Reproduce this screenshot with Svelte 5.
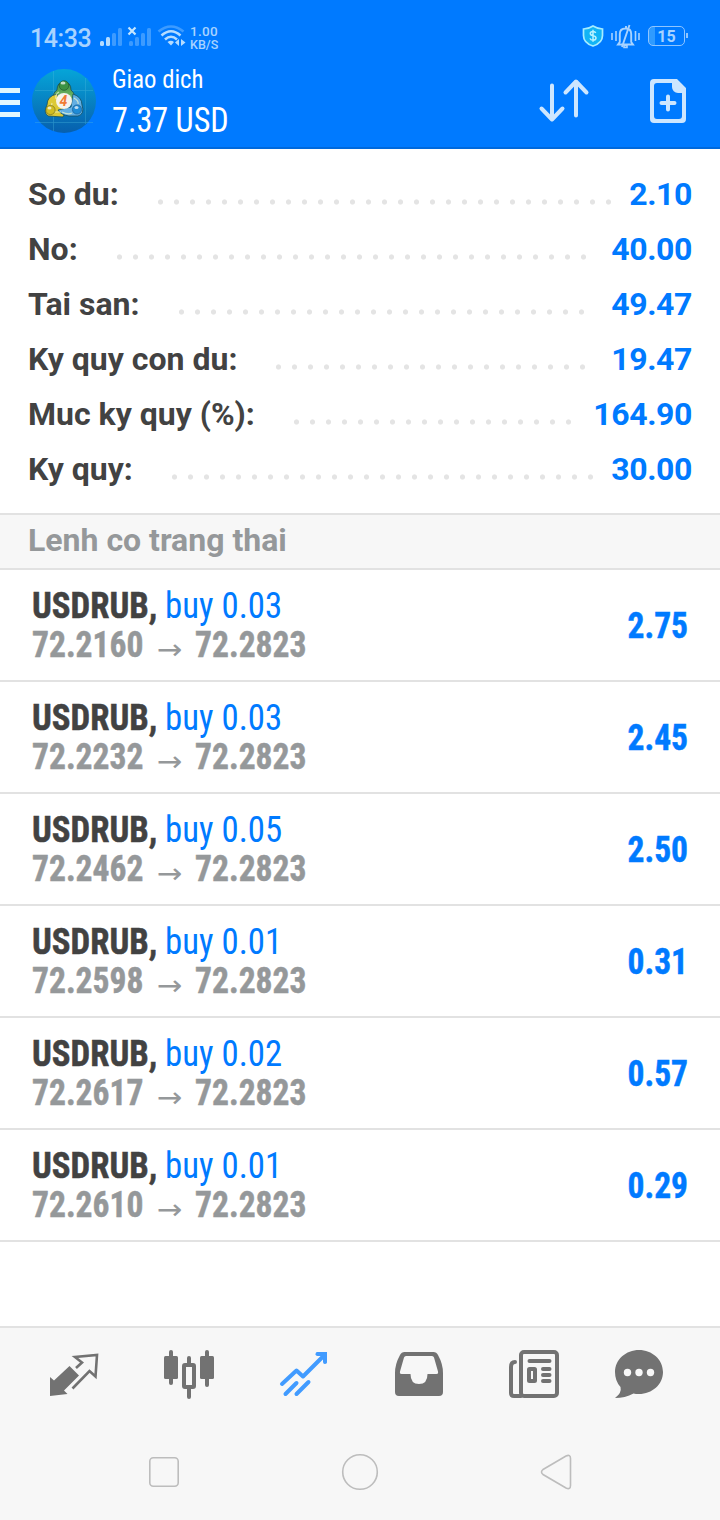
<script lang="ts">
  const summary = [
    { label: "So du:", value: "2.10" },
    { label: "No:", value: "40.00" },
    { label: "Tai san:", value: "49.47" },
    { label: "Ky quy con du:", value: "19.47" },
    { label: "Muc ky quy (%):", value: "164.90" },
    { label: "Ky quy:", value: "30.00" },
  ];

  const positions = [
    { volume: "0.03", open: "72.2160", current: "72.2823", profit: "2.75" },
    { volume: "0.03", open: "72.2232", current: "72.2823", profit: "2.45" },
    { volume: "0.05", open: "72.2462", current: "72.2823", profit: "2.50" },
    { volume: "0.01", open: "72.2598", current: "72.2823", profit: "0.31" },
    { volume: "0.02", open: "72.2617", current: "72.2823", profit: "0.57" },
    { volume: "0.01", open: "72.2610", current: "72.2823", profit: "0.29" },
  ];
</script>

<div class="screen">
  <header class="top">
    <div class="status">
      <span class="clock">14:33</span>
      <svg class="signal" width="52" height="26" viewBox="99 24 52 26">
        <g fill="#b5dcff">
          <rect x="100" y="41" width="4" height="5" rx="1.5" />
          <rect x="106" y="37" width="4" height="9" rx="1.5" />
        </g>
        <g fill="#3d9bff">
          <rect x="112" y="33" width="4" height="13" rx="1.5" />
          <rect x="118" y="28" width="4" height="18" rx="1.5" />
          <rect x="129" y="41" width="4" height="5" rx="1.5" />
          <rect x="135" y="37" width="4" height="9" rx="1.5" />
          <rect x="141" y="33" width="4" height="13" rx="1.5" />
          <rect x="147" y="28" width="4" height="18" rx="1.5" />
        </g>
        <path d="M128.5 27.5l7 7M135.500 27.500l-7 7" stroke="#c5e6ff" stroke-width="2.2" />
      </svg>
      <svg class="wifi" width="30" height="26" viewBox="157 24 30 26" fill="none" stroke-width="2.6">
        <path d="M158.500 31.500Q171 21.500 183.500 31.500" stroke="#3d9bff" />
        <path d="M161.500 35.500Q171 27 180.500 35.500M165 39.500Q171 34 177 39.500" stroke="#b5dcff" />
        <path d="M167.500 42Q171 39.500 174 42L171 45.500z" fill="#b5dcff" />
        <path d="M179 39v7l-4-3.500zM181 39v7l4.500-3.500z" fill="#b5dcff" />
      </svg>
      <div class="speed">
        <span class="rate">1.00</span>
        <span>KB/S</span>
      </div>
      <svg class="shield" width="22" height="24" viewBox="582 24 22 24">
        <path
          d="M593 26q5 3 9.500 3v6.500q0 7.500-9.500 10.500q-9.500-3-9.500-10.500V29q5 0 9.500-3z"
          fill="#12b4f5"
          stroke="#a5ecff"
          stroke-width="1.700"
        />
        <path
          d="M595.700 33q-.5-1.500-2.700-1.500q-2.700 0-2.700 2.100q0 1.700 2.700 2.100q3 .5 3 2.300q0 2.200-3 2.200q-2.500 0-3-1.800M593 29.800v12"
          fill="none"
          stroke="#b8f2ff"
          stroke-width="1.500"
        />
      </svg>
      <svg class="bell" width="30" height="26" viewBox="611 24 30 26" fill="none" stroke="#a8d3ff" stroke-width="1.600">
        <path d="M612 33v7M616 31v10M635.500 31v10M639 33v7" />
        <path d="M618 44.500h15l-1.800-2.500V34q0-5.500-5.700-5.500T619.800 34v8zM626 26v3M622 47L629.500 25" stroke-width="1.900" />
        <path d="M624 45.500h3v2h-3z" />
      </svg>
      <div class="battery"><span>15</span></div>
    </div>

    <div class="bar">
      <div class="burger"><i></i><i></i><i></i></div>
      <svg class="logo" width="64" height="64" viewBox="0 0 64 64">
        <defs>
          <linearGradient id="sky" x1="0" y1="0" x2="0" y2="1">
            <stop offset="0" stop-color="#06a5d8" />
            <stop offset="1" stop-color="#075fad" />
          </linearGradient>
          <linearGradient id="green" x1="0" y1="0" x2="0" y2="1">
            <stop offset="0" stop-color="#3c8c42" />
            <stop offset="1" stop-color="#8fd07a" />
          </linearGradient>
        </defs>
        <circle cx="32" cy="32" r="32" fill="url(#sky)" />
        <path d="M21.500 2v60M53.500 9v46M3 21.500h58M3 53.500h58" stroke="#4bb8dd" stroke-width=".7" opacity=".5" />
        <g stroke="#174f5e" stroke-width=".8">
          <path d="M21 33q-1-9 4-12q0-8 7-8t7 8q5 4 4 12l-8 4h-7z" fill="url(#green)" />
          <path d="M25 25q-10 2-10 11q-4 7 1 11l15 1q4-6-1-12z" fill="#dcc936" />
          <path d="M41 25q9 3 9 11q3 9-4 11H37q-8-1-11-6l13-3z" fill="#62afe3" />
        </g>
        <path d="M24 30q-1-5 3-7M20 34q-2 7 3 9h6M42 29q5 3 4 6M30 43q6 3 10 1" fill="none" stroke="#f1f6cf" stroke-width="1.200" opacity=".7" />
        <circle cx="32" cy="16.500" r="4.800" fill="#3d9244" stroke="#174f2e" stroke-width=".6" />
        <circle cx="18.500" cy="41" r="4.600" fill="#d1bd22" stroke="#6b641c" stroke-width=".6" />
        <circle cx="45" cy="40.500" r="4.600" fill="#1e8bd6" stroke="#14568c" stroke-width=".6" />
        <g fill="#fff" opacity=".7">
          <ellipse cx="31" cy="14" rx="2.500" ry="1.500" />
          <ellipse cx="17.500" cy="39" rx="2" ry="1.500" />
          <ellipse cx="44.500" cy="38.500" rx="2" ry="1.500" />
        </g>
        <circle cx="32" cy="32" r="8" fill="#f6f3ec" />
        <text x="31.500" y="37" text-anchor="middle" class="logo-digit">4</text>
      </svg>
      <div class="account">
        <span class="title narrow">Giao dich</span>
        <span class="balance narrow">7.37 USD</span>
      </div>
      <svg class="sort" width="52" height="46" viewBox="538 78 52 46" fill="none" stroke="#cde6ff" stroke-width="4" stroke-linecap="round" stroke-linejoin="round">
        <path d="M552 85.500V119M541.500 108.500L552 119.500L562.500 108.500M576 115.500V83M565.500 92.500L576 81.500L586.500 92.500" />
      </svg>
      <svg class="new-order" width="38" height="46" viewBox="649 78 38 46">
        <path
          fill="#cde6ff"
          fill-rule="evenodd"
          d="M654 79h23l9 9v31a4 4 0 0 1-4 4h-28a4 4 0 0 1-4-4V83a4 4 0 0 1 4-4zM657 83a3 3 0 0 0-3 3v30a3 3 0 0 0 3 3h22a3 3 0 0 0 3-3V93h-4a6 6 0 0 1-6-6v-4z"
        />
        <path d="M668 96.500v13M661.500 103h13" stroke="#cde6ff" stroke-width="4" stroke-linecap="round" />
      </svg>
    </div>
  </header>

  <section class="summary">
    {#each summary as row}
      <div class="row">
        <span class="label">{row.label}</span>
        <span class="dots"></span>
        <span class="value">{row.value}</span>
      </div>
    {/each}
  </section>

  <h2 class="heading">Lenh co trang thai</h2>

  <ul class="positions">
    {#each positions as p}
      <li class="position">
        <div class="deal">
          <div class="line narrow"><b>USDRUB,</b><span class="side">buy {p.volume}</span></div>
          <div class="line prices narrow"><b>{p.open}</b><span class="arrow">→</span><b>{p.current}</b></div>
        </div>
        <b class="profit narrow">{p.profit}</b>
      </li>
    {/each}
  </ul>

  <nav class="tabs">
    <svg width="52" height="52" viewBox="48 1348 52 52">
      <path d="M50 1377l4 3.500L69.500 1366l9.500 9.500L64 1390.500l3.500 3.500L50 1396z" fill="#727272" />
      <path
        d="M76 1368l6-5.500l-7-5.500l22-2l-1.500 21.500l-6-5.500L72.500 1388.500"
        fill="none"
        stroke="#727272"
        stroke-width="2.600"
      />
    </svg>
    <svg width="52" height="52" viewBox="163 1348 52 52" fill="#727272">
      <rect x="164" y="1356" width="14" height="23" rx="1.500" />
      <rect x="169" y="1350" width="4" height="35" rx="2" />
      <rect x="200" y="1356" width="14" height="23" rx="1.500" />
      <rect x="205" y="1350" width="4" height="37" rx="2" />
      <path d="M189 1358v6M189 1388v9" stroke="#727272" stroke-width="4" stroke-linecap="round" />
      <rect x="184" y="1365" width="10" height="22" rx="1" fill="none" stroke="#727272" stroke-width="4" />
    </svg>
    <svg width="52" height="52" viewBox="278 1348 52 52" fill="none" stroke="#419bff" stroke-width="4" stroke-linecap="round">
      <path d="M282 1384l14.500-13.500l6.500 6L324 1355.500" stroke-linejoin="round" />
      <path d="M285.500 1394l11-11M296.500 1394l12-12" />
      <path d="M317 1352h10v10.500l-3 1v-5.500l-4.500-3h-4z" fill="#419bff" stroke="none" />
      <path d="M317.500 1354h7.500v8" stroke-linejoin="miter" />
    </svg>
    <svg width="52" height="52" viewBox="393 1348 52 52">
      <path
        fill="#727272"
        fill-rule="evenodd"
        d="M404.500 1352h29q3 0 4.500 3q5 9 5 18v19q0 4-4 4h-40q-4 0-4-4v-19q0-9 5-18q1.500-3 4.500-3zM406 1356q-1.500 0-2 1.500l-4 14q-.5 2.500 1.500 2.500h9q0 10 8.500 10t8.500-10h9q2 0 1.500-2.500l-4-14q-.5-1.500-2-1.500z"
      />
    </svg>
    <svg width="52" height="52" viewBox="508 1348 52 52" fill="none" stroke="#727272" stroke-width="4" stroke-linecap="round">
      <rect x="521" y="1352" width="36" height="44" rx="3" />
      <path d="M521 1396h-7q-3 0-3-3v-26q0-5 4-5" />
      <path d="M529.500 1361h20M543 1369h6.500M543 1375h6.500M543 1381h6.500" />
      <rect x="529" y="1369" width="6" height="12" rx=".5" />
    </svg>
    <svg class="chat" width="52" height="52" viewBox="613 1348 52 52">
      <path
        d="M639 1350c13 0 24 9.500 24 22s-11 22-24 22q-3.500 0-5.500-.5q-8.500 4.500-18.500 4.500q7-5 5.500-11q-5.500-6-5.500-15c0-12.500 11-22 24-22z"
        fill="#727272"
      />
      <g fill="#f7f7f7">
        <circle cx="627.500" cy="1372.500" r="3.700" />
        <circle cx="639" cy="1372.500" r="3.700" />
        <circle cx="650.500" cy="1372.500" r="3.700" />
      </g>
    </svg>
  </nav>

  <div class="system">
    <svg width="40" height="40" viewBox="0 0 40 40"><rect x="5.800" y="5.800" width="28.400" height="28.400" rx="3.500" /></svg>
    <svg width="40" height="40" viewBox="0 0 40 40"><circle cx="20" cy="20" r="17.300" /></svg>
    <svg width="40" height="40" viewBox="-4 0 40 40">
      <path d="M3 17.500L26 4Q30.500 2 30.500 6.500V33.500Q30.500 38 26 36L3 22.500Q0 20 3 17.500z" />
    </svg>
  </div>
</div>

<style>
  :global(body) {
    margin: 0;
  }

  .screen {
    display: flex;
    flex-direction: column;
    width: 720px;
    height: 1520px;
    overflow: hidden;
    background: #fff;
    font-family: Roboto, "Liberation Sans", sans-serif;
    color: #424242;
  }

  svg {
    display: block;
    flex-shrink: 0;
  }

  .narrow {
    font-family: "Roboto Condensed", Roboto, sans-serif;
    font-stretch: 75%;
  }

  .top {
    box-sizing: border-box;
    height: 149px;
    flex-shrink: 0;
    background: #007aff;
    border-bottom: 2px solid #0069dc;
  }

  .status {
    display: flex;
    height: 26px;
    padding: 24px 35px 0 30px;
    color: #a8d3ff;
  }

  .clock {
    width: 69px;
    font-size: 25px;
    line-height: 29px;
    font-weight: 500;
    letter-spacing: -0.4px;
  }

  .wifi {
    margin-left: 6px;
  }

  .speed {
    display: flex;
    flex-direction: column;
    margin-left: 3px;
    font-size: 12.5px;
    line-height: 13px;
    font-weight: 500;
  }

  .rate {
    font-size: 13.5px;
    line-height: 14px;
    letter-spacing: 0.3px;
  }

  .shield {
    margin-left: auto;
  }

  .bell {
    margin-left: 7px;
  }

  .battery {
    position: relative;
    box-sizing: border-box;
    width: 37px;
    height: 20px;
    margin: 2px 0 0 7px;
    border: 1.5px solid #8fc5ff;
    border-radius: 5px;
    background: linear-gradient(90deg, #2f9bff 6px, transparent 6px);
    font-size: 16px;
    line-height: 19px;
    font-weight: 700;
    text-align: center;
  }

  .battery::after {
    content: "";
    position: absolute;
    right: -4px;
    top: 6px;
    width: 2px;
    height: 5px;
    background: #8fc5ff;
  }

  .bar {
    display: flex;
    height: 97px;
  }

  .burger {
    display: flex;
    flex-direction: column;
    gap: 7px;
    width: 20px;
    padding-top: 38px;
  }

  .burger i {
    height: 5px;
    background: #e0f6ff;
  }

  .logo {
    margin: 19px 0 0 12px;
  }

  .logo-digit {
    font: italic 700 14px Roboto, sans-serif;
    fill: #f07b35;
  }

  .account {
    display: flex;
    flex-direction: column;
    width: 200px;
    margin-left: 16px;
    padding-top: 13px;
    color: #fff;
    white-space: nowrap;
  }

  .title {
    font-size: 26px;
    line-height: 32px;
    transform: scaleX(0.95);
    transform-origin: left;
  }

  .balance {
    font-size: 35px;
    line-height: 52px;
    transform: scaleX(0.92);
    transform-origin: left;
  }

  .sort {
    margin: 28px 0 0 auto;
  }

  .new-order {
    margin: 28px 33px 0 59px;
  }

  .summary {
    box-sizing: border-box;
    height: 364px;
    padding: 18px 28px 0;
    flex-shrink: 0;
  }

  .row {
    display: flex;
    height: 55px;
    font-size: 32px;
    line-height: 55px;
    font-weight: 700;
    white-space: nowrap;
  }

  .dots {
    flex: 1;
    height: 6px;
    margin: 32px 18px 0 39px;
    background: radial-gradient(circle at 2.5px 3px, #e4e4e4 2.2px, transparent 3px) 0 0 / 16px 6px repeat-x;
  }

  .value {
    color: #007aff;
    letter-spacing: -0.4px;
  }

  .heading {
    box-sizing: border-box;
    height: 57px;
    flex-shrink: 0;
    margin: 0;
    padding-left: 28px;
    border: solid #e2e2e2;
    border-width: 2px 0;
    background: #f7f7f7;
    color: #95989a;
    font-size: 32px;
    line-height: 50px;
    font-weight: 700;
  }

  .positions {
    flex: 1;
    margin: 0;
    padding: 0;
    list-style: none;
  }

  .position {
    box-sizing: border-box;
    display: flex;
    justify-content: space-between;
    height: 112px;
    padding: 17px 32px 0;
    border-bottom: 2px solid #e2e2e2;
    font-size: 36px;
    white-space: nowrap;
  }

  .position b {
    -webkit-text-stroke: 0.5px currentColor;
  }

  .line {
    height: 39px;
    line-height: 39px;
    transform: scaleX(0.966);
    transform-origin: left;
  }

  .side {
    margin-left: 8px;
  }

  .side,
  .profit {
    color: #007aff;
  }

  .prices {
    color: #95989a;
    transform: scaleX(0.931);
  }

  .arrow {
    display: inline-block;
    width: 55.5px;
    font-family: "DejaVu Sans", sans-serif;
    font-size: 28px;
    text-align: center;
    transform: translateY(2px) scaleX(1.3);
  }

  .profit {
    line-height: 78px;
    transform: scaleX(0.93);
    transform-origin: right;
  }

  .tabs {
    box-sizing: border-box;
    display: flex;
    gap: 63px;
    height: 98px;
    flex-shrink: 0;
    padding: 20px 0 0 48px;
    border-top: 2px solid #e2e2e2;
    background: #f7f7f7;
  }

  .chat {
    margin-left: -10px;
  }

  .system {
    display: flex;
    justify-content: space-between;
    height: 68px;
    flex-shrink: 0;
    padding: 28px 144px 0;
    background: #f7f7f7;
  }

  .system svg {
    fill: none;
    stroke: #bdbdbd;
    stroke-width: 1.6;
  }
</style>
